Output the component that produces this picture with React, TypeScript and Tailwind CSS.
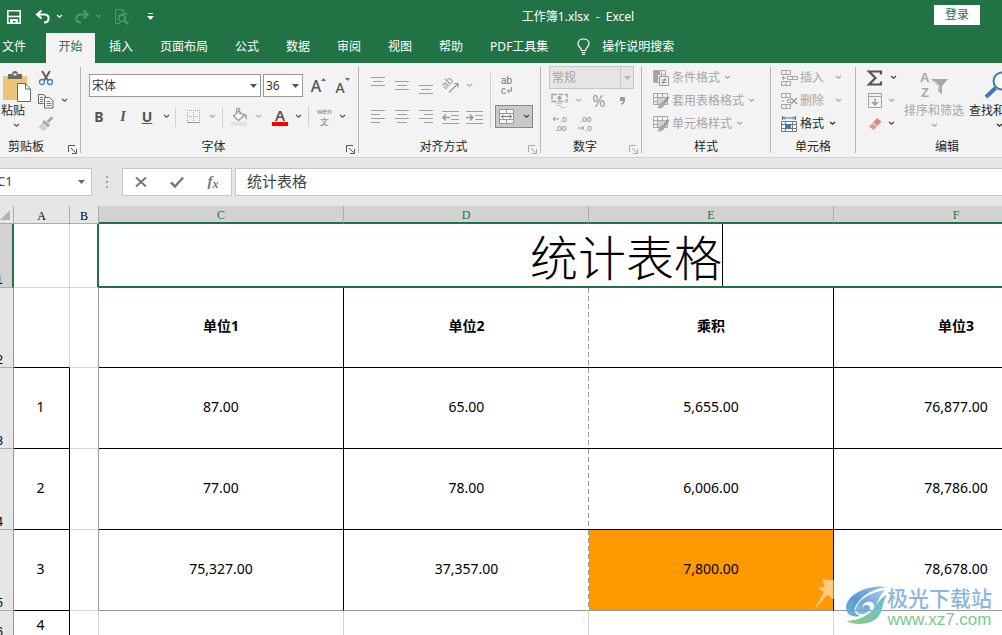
import type { ReactNode } from "react";
import clsx from "clsx";

const Icon = ({ w = 16, h = 16, children }: { w?: number; h?: number; children: ReactNode }) => (
  <svg
    width={w}
    height={h}
    viewBox={`0 0 ${w} ${h}`}
    fill="none"
    stroke="currentColor"
    className="shrink-0 overflow-visible font-['Liberation_Sans',sans-serif]"
    aria-hidden="true"
  >
    {children}
  </svg>
);

const Chevron = () => (
  <Icon w={7} h={5}>
    <path d="M1 1l2.5 2.3L6 1" strokeWidth="1.2" />
  </Icon>
);

const Triangle = () => (
  <Icon w={7} h={4}>
    <path d="M0 0h7L3.5 4z" fill="currentColor" stroke="none" />
  </Icon>
);

const Tool = ({ label, className, children }: { label: string; className?: string; children: ReactNode }) => (
  <button type="button" aria-label={label} className={clsx("flex h-[23px] shrink-0 items-center justify-center", className)}>
    {children}
  </button>
);

const Separator = () => <div className="mt-1 h-[86px] w-px shrink-0 bg-[#b8b8b8]" />;

const Group = ({
  title,
  className,
  launcher,
  children,
}: {
  title: string;
  className: string;
  launcher?: string;
  children: ReactNode;
}) => (
  <section className={clsx("flex shrink-0 flex-col", className)}>
    <div className="flex h-[74px]">{children}</div>
    <div className="flex h-5 items-center">
      <h2 className="flex-1 text-center">{title}</h2>
      {launcher && (
        <button type="button" aria-label={`${title}设置`} className={clsx("w-3 pt-1", launcher)}>
          <Icon w={9} h={9}>
            <path d="M.5 7V.5H7M3 3l4.5 4.5M8.5 4v4.5H4" />
          </Icon>
        </button>
      )}
    </div>
  </section>
);

/* Text alignment glyph: each entry is one line, [x, width] */
const Lines = ({ rows, top = 1 }: { rows: number[][]; top?: number }) => (
  <Icon w={16} h={18}>
    {rows.map(([x, width], i) => (
      <path key={i} d={`M${x} ${top + i * 4 + 0.5}h${width}`} stroke="#a0a0a0" />
    ))}
  </Icon>
);

const SaveIcon = () => (
  <Icon>
    <path d="M1.8 1.8h12.4v12.4H1.8z" strokeWidth="1.6" />
    <path d="M2 7.5h12" strokeWidth="1.6" />
    <path d="M4 15V10h8v5H9.5v-3H7v3z" fill="currentColor" stroke="none" />
  </Icon>
);

const UndoIcon = () => (
  <Icon>
    <path d="M6.5 1.5L2 5.5l4.5 4M2.5 5.5H10c5 0 5 8-1 8" strokeWidth="2" />
  </Icon>
);

const RedoIcon = () => (
  <Icon>
    <path d="M9.5 1.5L14 5.5l-4.5 4M13.5 5.5H6c-5 0-5 8 1 8" strokeWidth="2" />
  </Icon>
);

const PreviewIcon = () => (
  <Icon>
    <path d="M6 14.5H1.5V.5h7l4 4v2M8.5.5v4h4" />
    <circle cx="8" cy="9" r="3.3" strokeWidth="1.5" />
    <path d="M10.5 11.5l4 4" strokeWidth="2" />
  </Icon>
);

const PasteIcon = () => (
  <Icon w={29} h={31}>
    <path d="M1 5h24v24H1z" fill="#ecc57c" stroke="none" />
    <path d="M6 8V3h4c0-4 6-4 6 0h4v5z" fill="#6a6a6a" stroke="none" />
    <path d="M11.5 3.5h3" stroke="#f1f1f1" strokeWidth="2" />
    <path d="M15.5 12.5h8l5 5.5v12.5h-13z" fill="#fff" stroke="#6a6a6a" />
    <path d="M23.5 12.5V18h5" stroke="#6a6a6a" />
  </Icon>
);

const CutIcon = () => (
  <Icon>
    <path d="M4 1l6 9.5M12 1L6 10.5" stroke="#5e5e5e" strokeWidth="2" />
    <circle cx="4" cy="12" r="2.5" stroke="#4c7fb5" strokeWidth="1.3" />
    <circle cx="12" cy="12" r="2.5" stroke="#4c7fb5" strokeWidth="1.3" />
  </Icon>
);

const CopyIcon = () => (
  <Icon>
    <path d="M5.5 10.5h-5V1.500h5l2.5 2.5v1" stroke="#666" />
    <path d="M6.5 4.5h5l3.500 3.500v7H6.500z" fill="#fff" stroke="#666" />
    <path d="M2 4.5h3M2 6.5h3M2 8.5h3M8.5 8.5h4M8.5 10.5h5M8.5 12.5h5" stroke="#4c7fb5" />
  </Icon>
);

const PainterIcon = () => (
  <Icon>
    <path d="M14.5 1.5l-5 4.5" stroke="#a8a8a8" strokeWidth="3" />
    <path d="M6 4l6 5-2 2.5-6-5z" fill="#a8a8a8" stroke="none" />
    <path d="M4 7.5l5 4.5-4 3.5c-1-2-3-4-5-4.500z" fill="#cfcfcf" stroke="none" />
  </Icon>
);

const BordersIcon = () => (
  <Icon>
    <path d="M1 1.5h13M1 7.5h13M1.5 1v12M7.5 1v12M13.5 1v12" stroke="#aaa" strokeDasharray="1 1" />
    <path d="M1 13.5h13" stroke="#999" />
  </Icon>
);

const FillIcon = () => (
  <Icon w={17} h={18}>
    <path d="M7.5 3L2.500 8l5 4.5 5.5-5zM5.5 5V1.500c0-1.500 3-1.500 3 0V6" stroke="#a0a0a0" strokeWidth="1.3" />
    <path d="M12 5l4 2v5c-1.500-1.500-1.500-3-3-4.500z" fill="#a8a8a8" stroke="none" />
    <path d="M0 14h16v4H0z" fill="#e3e3e3" stroke="none" />
  </Icon>
);

const OrientationIcon = () => (
  <Icon w={17} h={17}>
    <text x="-1" y="9" transform="rotate(-45 5 7)" fontSize="11" fill="#999" stroke="none">ab</text>
    <path d="M6 15.5l9-9M11 6.500h4v4" stroke="#999" strokeWidth="1.2" />
  </Icon>
);

const IndentIcon = ({ right }: { right?: boolean }) => (
  <Icon w={17} h={14}>
    <path d="M0 1.5h17M9 5.5h8M9 9.5h8M0 13.5h17" stroke="#a0a0a0" />
    <path d={right ? "M0 7.5h7M4 4.5l3 3-3 3" : "M1 7.5h7M4 4.5l-3 3 3 3"} stroke="#999" strokeWidth="1.5" />
  </Icon>
);

const MergeIcon = () => (
  <Icon>
    <path d="M.5.5h14v14H.5zM.5 4.5h14M.5 10.5h14M7.5.5v4M7.5 10.5v4" fill="#f6f6f6" stroke="#999" />
    <path d="M2.5 7.5h10M4.5 5.5l-2 2 2 2M10.5 5.5l2 2-2 2" stroke="#777" />
  </Icon>
);

const CurrencyIcon = () => (
  <Icon w={17} h={16}>
    <path d="M1 1.5h15v7H1z" stroke="#a4a4a4" strokeWidth="1.5" strokeDasharray="5 1.5" />
    <circle cx="8.5" cy="5" r="2" fill="#a4a4a4" stroke="none" />
    <path d="M5 10.5h6M5 12.5h6M9 14.5h6M11 8.5h5" stroke="#c8c8c8" />
  </Icon>
);

const DecimalIcon = ({ less }: { less?: boolean }) => (
  <Icon w={16} h={18}>
    <text x={less ? 3 : 8} y="7" fontSize="8" fill="#777" stroke="none">{less ? ".00" : ".0"}</text>
    <text x={less ? 8 : 3} y="16" fontSize="8" fill="#777" stroke="none">{less ? ".0" : ".00"}</text>
    <path d={less ? "M1 13h6M5 11l2 2-2 2" : "M7 4H1M3 2L1 4l2 2"} stroke="#999" />
  </Icon>
);

const ConditionalIcon = () => (
  <Icon>
    <path d="M.5.5h12v12H.5zM.5 4.5h12M.5 8.5h12M4.5.5v12M8.5.5v12" stroke="#b0b0b0" />
    <path d="M1 1h6v3H1zM1 5h4v3H1zM1 9h3v3H1z" fill="#a0a0a0" stroke="none" />
    <path d="M6.5 6.5h9v9h-9z" fill="#f6f6f6" stroke="#999" />
    <path d="M8.5 10h5M8.5 12.5h5M12.5 8l-3 6" stroke="#888" />
  </Icon>
);

const TableStyleIcon = () => (
  <Icon>
    <path d="M.5.5h14v11H.5zM.5 4.5h14M.5 8.5h14M4.5.5v11M9.5.5v11" stroke="#a8a8a8" />
    <path d="M5 5h9v6H5z" fill="#d2d2d2" stroke="none" />
    <path d="M15.5 4L10 11" stroke="#999" strokeWidth="2.5" />
    <path d="M9 9.5c2 0 3 2 2 3.500-1.500 2.500-4 2.500-7 2 2-1 2-5 5-5.500z" fill="#aaa" stroke="none" />
  </Icon>
);

const InsertIcon = () => (
  <Icon w={17}>
    <path d="M.5.5h9v4h-9zM5 .5v4M.5 11.5h9v4h-9zM5 11.5v4M6.5 6.5h10v3h-10zM11.5 6.5v3" stroke="#a4a4a4" />
    <path d="M5 8H1M3 6L1 8l2 2" stroke="#999" />
  </Icon>
);

const DeleteIcon = () => (
  <Icon w={17}>
    <path d="M.5.5h9v4h-9zM5 .5v4M.5 11.5h9v4h-9zM5 11.5v4M.5 8h3M6.5 6.5h3v3h-3z" stroke="#a4a4a4" />
    <path d="M10 5l6 6M16 5l-6 6" stroke="#999" strokeWidth="1.3" />
  </Icon>
);

const FormatIcon = () => (
  <Icon>
    <path d="M1.5 0v4M14.5 0v4M2 2h12M4 .5L2.5 2 4 3.5M12 .5L13.5 2 12 3.5" stroke="#3c78b4" />
    <path d="M.5 5.5h15v10H.5zM.5 8.5h15M.5 12.5h15M4.5 5.5v10M11.5 5.5v10" fill="#fff" stroke="#777" />
    <path d="M5 8h5v5H5z" fill="#3c78b4" stroke="none" />
  </Icon>
);

const SumIcon = () => (
  <Icon>
    <path d="M14 4.5V1.5H2L8.5 8 2 14.500h12v-3" stroke="#555" strokeWidth="2.2" />
  </Icon>
);

const FillDownIcon = () => (
  <Icon w={14} h={15}>
    <path d="M.5.5h13v14H.5zM.5 3.5h13" stroke="#a0a0a0" />
    <path d="M7 5.500v6.500M4 9l3 3 3-3" stroke="#999" strokeWidth="1.5" />
  </Icon>
);

const EraserIcon = () => (
  <Icon w={14} h={12}>
    <path d="M9 0l4.500 3.500L9.500 8 5 4.500z" fill="#e8808c" stroke="none" />
    <path d="M4.300 5.300L8.800 8.800 5.500 12 1 8.500z" fill="#ee8f9a" stroke="none" />
  </Icon>
);

const SortFilterIcon = () => (
  <Icon w={30} h={28}>
    <text x="1" y="11" fontSize="13" fontWeight="700" fill="#a8a8a8" stroke="none">A</text>
    <text x="2" y="26" fontSize="13" fontWeight="700" fill="#a8a8a8" stroke="none">Z</text>
    <path d="M12 8h17l-6 7v8l-4-3v-5z" fill="#a8a8a8" stroke="none" />
    <path d="M15 10l5 5v4" stroke="#e8e8e8" />
  </Icon>
);

const SearchIcon = () => (
  <Icon w={30} h={28}>
    <circle cx="18" cy="10" r="8.500" stroke="#3c78b4" strokeWidth="2" fill="#fbfbfb" />
    <path d="M11.5 17L2 26" stroke="#3c78b4" strokeWidth="4" />
  </Icon>
);

const BulbIcon = () => (
  <Icon w={13} h={17}>
    <path d="M4.5 12.5C4.500 9.500 1 9 1 5.800 1 2.800 3.500 1 6.500 1S12 2.800 12 5.800c0 3.200-3.500 3.700-3.500 6.700zM4.500 14.500h4M5 16.300h3" strokeWidth="1.2" />
  </Icon>
);

const TitleBar = () => (
  <header className="flex h-[33px] items-center text-white">
    <div className="flex items-center pl-[6px]">
      <Tool label="保存" className="w-4"><SaveIcon /></Tool>
      <Tool label="撤消" className="ml-[13px] w-4"><UndoIcon /></Tool>
      <Tool label="撤消选项" className="w-[17px]"><Chevron /></Tool>
      <Tool label="恢复" className="ml-[6px] w-4 text-[#4f9a70]"><RedoIcon /></Tool>
      <Tool label="恢复选项" className="w-[17px] text-[#4f9a70]"><Chevron /></Tool>
      <Tool label="打印预览" className="ml-[7px] w-4 text-[#4f9a70]"><PreviewIcon /></Tool>
      <Tool label="自定义快速访问工具栏" className="ml-3 w-4">
        <Icon w={7} h={7}>
          <path d="M1 .5h5" />
          <path d="M0 3h7L3.5 7z" fill="currentColor" stroke="none" />
        </Icon>
      </Tool>
    </div>
    <h1 className="flex-1 pl-16 text-center whitespace-pre">工作簿1.xlsx  -  Excel</h1>
    <button type="button" className="mr-[22px] mb-1 h-5 w-[46px] bg-white text-[#217346]">登录</button>
  </header>
);

const tabs = ["插入", "页面布局", "公式", "数据", "审阅", "视图", "帮助", "PDF工具集"];

const TabBar = () => (
  <nav className="flex h-[30px] gap-px whitespace-nowrap text-white">
    <button type="button" className="w-[45px] shrink-0 pb-[3px] pl-[2px] text-left">文件</button>
    <button type="button" className="w-[49px] shrink-0 bg-[#f3f3f3] pb-[3px] text-[#217346]">开始</button>
    {tabs.map((tab) => (
      <button key={tab} type="button" className="px-[13px] pb-[3px]">{tab}</button>
    ))}
    <button type="button" className="flex items-center gap-3 px-[15px] pb-[3px]">
      <BulbIcon />
      操作说明搜索
    </button>
  </nav>
);

const Divider = () => <span className="h-5 w-px shrink-0 bg-[#d0d0d0]" />;

/* The first group runs off the left edge of the window */
const ClipboardGroup = () => (
  <Group title="剪贴板" className="-ml-4 w-24" launcher="text-[#555]">
    <button type="button" className="ml-4 flex w-8 flex-col items-center pt-2">
      <PasteIcon />
      <span className="w-8 pt-px pl-px text-left leading-4">粘贴</span>
      <span className="pt-1 text-[#555]"><Chevron /></span>
    </button>
    <div className="flex flex-col pt-[3px] pl-[6px] text-[#555]">
      <Tool label="剪切" className="w-4"><CutIcon /></Tool>
      <div className="flex gap-1">
        <Tool label="复制" className="w-4"><CopyIcon /></Tool>
        <Tool label="复制选项" className="w-3"><Chevron /></Tool>
      </div>
      <Tool label="格式刷" className="w-4"><PainterIcon /></Tool>
    </div>
  </Group>
);

const FontGroup = () => (
  <Group title="字体" className="w-[277px]" launcher="text-[#555]">
    <div className="flex flex-col gap-2 pt-[11px] pl-2 text-[#555]">
      <div className="flex items-center">
        <div className="relative mr-[2px]">
          <select aria-label="字体" className="block h-[23px] w-[172px] appearance-none border border-[#999] bg-white pl-[2px] text-[#333]">
            <option>宋体</option>
          </select>
          <span className="pointer-events-none absolute top-[10px] right-1"><Triangle /></span>
        </div>
        <div className="relative">
          <select aria-label="字号" className="block h-[23px] w-10 appearance-none border border-[#999] bg-white pl-[2px] text-[#333]">
            <option>36</option>
          </select>
          <span className="pointer-events-none absolute top-[10px] right-1"><Triangle /></span>
        </div>
        <Tool label="增大字号" className="ml-2 w-[15px] font-medium">
          <span className="text-base leading-5">A</span>
          <span className="-mt-3 text-[#4472b8]"><Icon w={5} h={3}><path d="M0 3h5L2.5 0z" fill="currentColor" stroke="none" /></Icon></span>
        </Tool>
        <Tool label="减小字号" className="ml-[9px] w-[15px] font-medium">
          <span className="pt-1 text-sm leading-4">A</span>
          <span className="-mt-3 text-[#4472b8]"><Icon w={5} h={3}><path d="M0 0h5L2.5 3z" fill="currentColor" stroke="none" /></Icon></span>
        </Tool>
      </div>
      <div className="flex items-center">
        <Tool label="加粗" className="w-5 text-sm font-bold">B</Tool>
        <Tool label="倾斜" className="ml-1 w-5 font-['Liberation_Serif',serif] text-sm font-bold italic">I</Tool>
        <Tool label="下划线" className="ml-1 w-5 text-sm font-bold underline">U</Tool>
        <Tool label="下划线选项" className="w-[18px]"><Chevron /></Tool>
        <Divider />
        <Tool label="边框" className="ml-[10px] w-4"><BordersIcon /></Tool>
        <Tool label="边框选项" className="w-5 text-[#aaa]"><Chevron /></Tool>
        <Divider />
        <Tool label="填充颜色" className="ml-2 w-[17px]"><FillIcon /></Tool>
        <Tool label="填充颜色选项" className="w-5 text-[#aaa]"><Chevron /></Tool>
        <Tool label="字体颜色" className="ml-1 w-4 flex-col">
          <span className="text-[15px] leading-[14px] font-semibold">A</span>
          <span className="h-1 w-4 bg-[#f00]" />
        </Tool>
        <Tool label="字体颜色选项" className="w-5"><Chevron /></Tool>
        <Divider />
        <Tool label="拼音指南" className="ml-[7px] w-[18px] text-[#777]">
          <Icon w={16} h={20}>
            <text x="0" y="7" fontSize="8" fill="currentColor" stroke="none">wén</text>
            <text x="3" y="18" fontSize="9" fill="currentColor" stroke="none">文</text>
          </Icon>
        </Tool>
        <Tool label="拼音选项" className="w-4"><Chevron /></Tool>
      </div>
    </div>
  </Group>
);

const AlignGroup = () => (
  <Group title="对齐方式" className="w-[181px]" launcher="text-[#aaa]">
    <div className="flex w-[131px] flex-col gap-2 pt-[11px] pl-[7px]">
      <div className="flex">
        <Tool label="顶端对齐" className="w-6"><Lines top={0} rows={[[1, 14], [3, 10], [1, 14]]} /></Tool>
        <Tool label="垂直居中" className="w-6"><Lines top={4} rows={[[1, 14], [3, 10], [1, 14]]} /></Tool>
        <Tool label="底端对齐" className="w-6"><Lines top={8} rows={[[1, 14], [3, 10], [1, 14]]} /></Tool>
        <Tool label="方向" className="w-[27px]"><OrientationIcon /></Tool>
        <Tool label="方向选项" className="w-2 text-[#aaa]"><Chevron /></Tool>
      </div>
      <div className="flex">
        <Tool label="左对齐" className="w-6"><Lines top={2} rows={[[1, 14], [1, 9], [1, 14], [1, 9]]} /></Tool>
        <Tool label="居中" className="w-6"><Lines top={2} rows={[[1, 14], [3, 10], [1, 14], [3, 10]]} /></Tool>
        <Tool label="右对齐" className="w-6"><Lines top={2} rows={[[1, 14], [6, 9], [1, 14], [6, 9]]} /></Tool>
        <Tool label="减少缩进量" className="w-6"><IndentIcon /></Tool>
        <Tool label="增加缩进量" className="w-6"><IndentIcon right /></Tool>
      </div>
    </div>
    <span className="mt-[10px] h-[55px] w-px bg-[#cfcfcf]" />
    <div className="flex flex-col gap-2 pt-[11px] pl-1">
      <Tool label="自动换行" className="w-[23px]">
        <Icon w={13} h={20}>
          <text x="1" y="8" fontSize="10" fill="#777" stroke="none">ab</text>
          <text x="1" y="18" fontSize="10" fill="#777" stroke="none">c</text>
          <path d="M11.5 11v4H8M9.500 13l-2 2 2 2" stroke="#888" />
        </Icon>
      </Tool>
      <Tool label="合并后居中" className="w-[38px] gap-2 border border-[#888] bg-[#c9c9c9] text-[#444]">
        <MergeIcon />
        <Chevron />
      </Tool>
    </div>
  </Group>
);

const NumberGroup = () => (
  <Group title="数字" className="w-[100px]" launcher="text-[#aaa]">
    <div className="flex flex-col pt-[3px] pl-2 text-[#999]">
      <div className="relative">
        <select aria-label="数字格式" className="block h-[23px] w-[85px] appearance-none border border-[#c6c6c6] bg-[#e5e5e5] pl-[2px] text-[#a6a6a6]">
          <option>常规</option>
        </select>
        <span className="pointer-events-none absolute inset-y-0 right-0 flex w-[14px] items-center justify-center border-l border-[#c6c6c6] text-[#b4b4b4]"><Triangle /></span>
      </div>
      <div className="flex">
        <Tool label="会计数字格式" className="w-[21px]"><CurrencyIcon /></Tool>
        <Tool label="会计格式选项" className="w-4 text-[#aaa]"><Chevron /></Tool>
        <Tool label="百分比样式" className="w-[26px] text-base">%</Tool>
        <Tool label="千位分隔样式" className="w-5">
          <Icon w={5} h={8}>
            <path d="M0 0h5v3c0 2-1 4-4 5V6.500c1-.5 2-1 2-2.500H0z" fill="currentColor" stroke="none" />
          </Icon>
        </Tool>
      </div>
      <div className="flex">
        <Tool label="增加小数位数" className="w-[21px]"><DecimalIcon /></Tool>
        <Tool label="减少小数位数" className="ml-1 w-[21px]"><DecimalIcon less /></Tool>
      </div>
    </div>
  </Group>
);

const styleItems = [
  { label: "条件格式", icon: <ConditionalIcon /> },
  { label: "套用表格格式", icon: <TableStyleIcon /> },
  { label: "单元格样式", icon: <TableStyleIcon /> },
];

const StylesGroup = () => (
  <Group title="样式" className="w-32">
    <div className="flex flex-col pt-[3px] pl-[11px] text-[#a6a6a6]">
      {styleItems.map((item) => (
        <button key={item.label} type="button" className="flex h-[23px] items-center">
          {item.icon}
          <span className="pr-1 pl-[3px]">{item.label}</span>
          <Chevron />
        </button>
      ))}
    </div>
  </Group>
);

const cellItems = [
  { label: "插入", icon: <InsertIcon />, enabled: false },
  { label: "删除", icon: <DeleteIcon />, enabled: false },
  { label: "格式", icon: <FormatIcon />, enabled: true },
];

const CellsGroup = () => (
  <Group title="单元格" className="w-[84px]">
    <div className="flex flex-col pt-[3px] pl-[10px]">
      {cellItems.map((item) => (
        <button
          key={item.label}
          type="button"
          className={clsx("flex h-[23px] items-center", item.enabled ? "text-[#262626]" : "text-[#a6a6a6]")}
        >
          <span className="w-[19px]">{item.icon}</span>
          <span className={item.enabled ? "pr-[5px]" : "pr-[11px]"}>{item.label}</span>
          <Chevron />
        </button>
      ))}
    </div>
  </Group>
);

const EditingGroup = () => (
  <Group title="编辑" className="w-[182px]">
    <div className="flex flex-col pt-[3px] pl-[10px] text-[#444]">
      <div className="flex">
        <Tool label="自动求和" className="w-[18px]"><SumIcon /></Tool>
        <Tool label="求和选项" className="w-[18px]"><Chevron /></Tool>
      </div>
      <div className="flex">
        <Tool label="填充" className="w-[18px]"><FillDownIcon /></Tool>
        <Tool label="填充选项" className="w-[14px] text-[#aaa]"><Chevron /></Tool>
      </div>
      <div className="flex">
        <Tool label="清除" className="w-[18px]"><EraserIcon /></Tool>
        <Tool label="清除选项" className="w-[14px]"><Chevron /></Tool>
      </div>
    </div>
    <button type="button" className="ml-[2px] flex flex-col items-center pt-2 text-[#a6a6a6]">
      <SortFilterIcon />
      <span className="pt-1 leading-4">排序和筛选</span>
      <span className="pt-1"><Chevron /></span>
    </button>
    <button type="button" className="ml-[5px] flex flex-col items-center pt-2 text-[#262626]">
      <SearchIcon />
      <span className="pt-1 leading-4">查找和选择</span>
      <span className="pt-1"><Chevron /></span>
    </button>
  </Group>
);

const FormulaBar = () => (
  <div className="flex h-12 items-start pt-[10px]">
    <div className="flex h-7 w-[92px] shrink-0 items-center border border-l-0 border-[#c6c6c6] bg-white pr-[6px] text-[#666]">
      <input aria-label="名称框" defaultValue="C1" className="-ml-[3px] min-w-0 flex-1 text-[13px] text-[#444] outline-none" />
      <Triangle />
    </div>
    <span className="flex h-7 w-[30px] shrink-0 items-center justify-center text-[#a6a6a6]">
      <Icon w={2} h={12}><path d="M1 0v12" strokeWidth="2" strokeDasharray="2 3" /></Icon>
    </span>
    <div className="flex h-7 w-[110px] shrink-0 items-center border border-[#c6c6c6] bg-white text-[#777]">
      <Tool label="取消" className="w-9"><Icon w={12} h={12}><path d="M1 1.500l10 9M11 1.500l-10 9" strokeWidth="2" /></Icon></Tool>
      <Tool label="输入" className="w-9"><Icon w={14} h={12}><path d="M1 6.500l4 4 8-9" strokeWidth="2.5" /></Icon></Tool>
      <Tool label="插入函数" className="w-9 font-['Liberation_Serif',serif] text-[15px] font-bold italic">
        f<span className="pt-1 text-xs">x</span>
      </Tool>
    </div>
    <input
      aria-label="编辑栏"
      defaultValue="统计表格"
      className="ml-[3px] h-7 min-w-0 flex-1 border border-r-0 border-[#c6c6c6] bg-white pb-1 pl-[11px] text-[15px] text-[#444] outline-none"
    />
  </div>
);

const dataRows = [
  { index: 3, a: "1", cells: ["87.00", "65.00", "5,655.00", "76,877.00"] },
  { index: 4, a: "2", cells: ["77.00", "78.00", "6,006.00", "78,786.00"] },
  { index: 5, a: "3", cells: ["75,327.00", "37,357.00", "7,800.00", "78,678.00"] },
];

const pageBreak =
  "bg-[repeating-linear-gradient(to_bottom,#999_0_5px,transparent_5px_8px)] bg-[length:1px_100%] bg-right bg-no-repeat";

const RowHeader = ({ n }: { n: number }) => (
  <th scope="row" className="border-r border-b border-r-[#999] border-b-[#ababab] bg-[#e6e6e6] align-bottom font-['Liberation_Mono',monospace] text-xs leading-3 font-normal">
    {n}
  </th>
);

const Sheet = () => (
  <table className="-ml-[14px] w-[1167px] table-fixed border-separate border-spacing-0 bg-white text-center text-sm leading-5 text-black">
    <colgroup>
      <col className="w-7" />
      <col className="w-14" />
      <col className="w-[29px]" />
      <col className="w-[245px]" />
      <col className="w-[245px]" />
      <col className="w-[245px]" />
      <col className="w-[245px]" />
      <col className="w-[75px]" />
    </colgroup>
    <thead>
      <tr className="h-[18px] bg-[#e6e6e6] font-['Liberation_Serif',serif] text-xs leading-[14px]">
        <td className="border-r border-b border-[#ababab]">
          <span className="flex justify-end pr-[3px]">
            <Icon w={10} h={10}><path d="M10 0v10H0z" fill="#b4b4b4" stroke="none" /></Icon>
          </span>
        </td>
        {["A", "B"].map((c) => (
          <th key={c} scope="col" className="border-r border-b border-[#ababab] pt-[2px] font-normal">{c}</th>
        ))}
        {["C", "D", "E", "F", "G"].map((c) => (
          <th key={c} scope="col" className="border-r border-b-2 border-r-[#ababab] border-b-[#217346] bg-[#d2d2d2] pt-[2px] font-normal text-[#217346]">{c}</th>
        ))}
      </tr>
    </thead>
    <tbody>
      <tr className="h-16">
        <th scope="row" className="border-r-2 border-b border-r-[#217346] border-b-[#ababab] bg-[#d2d2d2] align-bottom font-['Liberation_Mono',monospace] text-xs leading-3 font-normal">1</th>
        <td className="border-r border-b border-[#d4d4d4]" />
        <td className="border-r-2 border-b border-r-[#217346] border-b-[#d4d4d4]" />
        <td colSpan={5} className="border-b-2 border-[#217346]">
          <span className="inline-flex h-[62px] items-center border-r border-black align-top font-['Noto_Sans_CJK_SC',sans-serif] text-5xl font-light">
            统计表格
          </span>
        </td>
      </tr>
      <tr className="h-20 text-sm font-bold">
        <RowHeader n={2} />
        <td className="border-r border-b border-r-[#d4d4d4] border-b-black" />
        <td className="border-r border-b border-r-[#999] border-b-[#d4d4d4]" />
        <td className="border-r border-b border-black pb-1">单位1</td>
        <td className={clsx("border-b border-black pb-1", pageBreak)}>单位2</td>
        <td className="border-r border-b border-black pb-1">乘积</td>
        <td className="border-r border-b border-black pb-1">单位3</td>
        <td className="border-b border-black" />
      </tr>
      {dataRows.map((row) => {
        const last = row.index === 5;
        const bottom = last ? "border-b-[#999]" : "border-b-black";
        return (
          <tr key={row.index} className="h-[81px]">
            <RowHeader n={row.index} />
            <td className="border-r border-b border-black pr-[2px] pb-[2px]">{row.a}</td>
            <td className="border-r border-b border-r-[#999] border-b-[#d4d4d4]" />
            {row.cells.map((value, i) => (
              <td
                key={i}
                className={clsx(
                  "border-b pb-[2px]",
                  bottom,
                  i === 1 ? pageBreak : "border-r border-r-black",
                  last && i === 2 && "bg-[#ff9900]"
                )}
              >
                {value}
              </td>
            ))}
            <td className={clsx("border-b", bottom)} />
          </tr>
        );
      })}
      <tr className="h-[29px]">
        <RowHeader n={6} />
        <td className="border-r border-b border-black pr-[2px]">4</td>
        {[0, 1, 2, 3, 4, 5].map((i) => (
          <td key={i} className="border-r border-b border-[#d4d4d4]" />
        ))}
      </tr>
    </tbody>
  </table>
);

const Watermark = () => (
  <div className="pointer-events-none absolute right-[10px] bottom-[5px] flex items-end">
    <svg width="74" height="54" viewBox="0 0 74 54" className="overflow-visible" aria-hidden="true">
      <defs>
        <linearGradient id="swirl" x1="1" y1="0" x2="0" y2="1">
          <stop offset="0" stopColor="#8fc4ee" />
          <stop offset="0.6" stopColor="#5d96d6" />
          <stop offset="1" stopColor="#6fb8d8" />
        </linearGradient>
        <linearGradient id="leaf" x1="1" y1="0" x2="0" y2="1">
          <stop offset="0" stopColor="#6fb7e6" />
          <stop offset="1" stopColor="#86cf78" />
        </linearGradient>
      </defs>
      <path d="M9 2c5 3 10 3 18 0l-5 10 9 8-9-2v6l-8-5L1 34 11 16 5 12l7-1z" fill="#fff" opacity="0.5" />
      <path d="M74 11C56 8 34 18 33 31c0 7 6 11 14 9-6-2-7-7-3-12 5-9 18-16 30-17z" fill="url(#swirl)" />
      <path d="M72 14c-12 2-26 8-29 18-1 7 8 8 13 3 2-3 1-6-3-6-2 0-3 1-3 3-2-5 6-8 10-5 3 3 1 8-4 10 8-2 7-14 16-23z" fill="url(#swirl)" opacity="0.85" />
      <path d="M33 45c8 4 24 5 32-4 5-6 4-14 9-22-10 4-11 14-19 19-7 5-15 7-22 7z" fill="url(#leaf)" />
    </svg>
    <div className="flex flex-col items-center">
      <span className="text-[21px] leading-6 font-medium text-[#8cb6e2]">极光下载站</span>
      <span className="font-['Liberation_Sans',sans-serif] text-[17px] leading-5 text-[#7cc98a]">www.xz7.com</span>
    </div>
  </div>
);

const App = () => {
  return (
    <div className="relative h-screen overflow-hidden bg-[#e6e6e6] font-['Noto_Sans','Noto_Sans_CJK_SC',sans-serif] text-xs text-[#262626]">
      <div className="bg-[#217346]">
        <TitleBar />
        <TabBar />
      </div>
      <div className="flex h-[95px] overflow-hidden border-b border-[#d2d2d2] bg-[#f3f3f3] whitespace-nowrap">
        <ClipboardGroup />
        <Separator />
        <FontGroup />
        <Separator />
        <AlignGroup />
        <Separator />
        <NumberGroup />
        <Separator />
        <StylesGroup />
        <Separator />
        <CellsGroup />
        <Separator />
        <EditingGroup />
      </div>
      <FormulaBar />
      <Sheet />
      <Watermark />
    </div>
  );
};

export default App;
